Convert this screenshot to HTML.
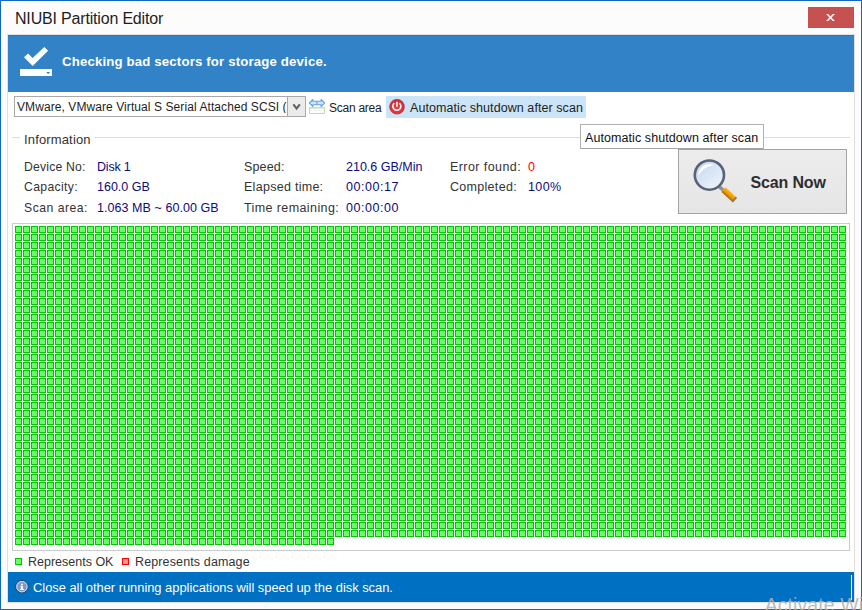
<!DOCTYPE html>
<html><head><meta charset="utf-8">
<style>
*{margin:0;padding:0;box-sizing:border-box}
html,body{width:862px;height:610px;overflow:hidden;background:#fcfcfc}
body{position:relative;font-family:"Liberation Sans",sans-serif;font-size:12px;color:#333}
.a{position:absolute;white-space:nowrap}
.t{position:absolute;white-space:nowrap;line-height:1}
</style></head><body>
<!-- window outer border -->
<div class="a" style="left:0;top:0;width:862px;height:610px;border:1px solid #0f68c8"></div>
<!-- title -->
<div class="t" style="left:15px;top:10.5px;font-size:16px;letter-spacing:-0.18px;color:#1e1e1e">NIUBI Partition Editor</div>
<!-- close button -->
<div class="a" style="left:808px;top:7px;width:46px;height:21px;background:#c75050">
  <svg width="46" height="21" style="position:absolute;left:0;top:0"><path d="M18.1 7 H20.2 L26.9 14 H24.8 Z M24.8 7 H26.9 L20.2 14 H18.1 Z" fill="#fff"/></svg>
</div>
<!-- client border -->
<div class="a" style="left:7px;top:34px;width:848px;height:569px;border:1px solid #e0e0e0;background:#fff"></div>
<!-- header -->
<div class="a" style="left:8px;top:35px;width:846px;height:57px;background:#3282c7;border-top:1px solid #2a78c2"></div>
<svg class="a" style="left:0;top:0" width="80" height="92">
  <path d="M24 57.3 L28.1 53.6 L32.6 57.9 L44.3 47 L48.1 50.7 L32.7 66 Z" fill="#fff"/>
  <rect x="20" y="69" width="32" height="7" fill="#fff"/>
  <path d="M46.3 72 H50.1 L48.6 73.8 H47.8 Z" fill="#3282c7"/>
</svg>
<div class="t" style="left:62px;top:55px;font-size:13.2px;font-weight:bold;color:#fff;letter-spacing:0.17px">Checking bad sectors for storage device.</div>

<!-- combobox -->
<div class="a" style="left:14px;top:96px;width:292px;height:21px;border:1px solid #a9a9a9;background:#fff"></div>
<div class="t" style="left:17px;top:101px;font-size:12px;letter-spacing:0.08px;color:#1e1e1e;width:270px;overflow:hidden">VMware, VMware Virtual S Serial Attached SCSI (Ahmed</div>
<div class="a" style="left:287px;top:97px;width:18px;height:19px;background:#ebebeb;border-left:1px solid #a9a9a9"></div>
<svg class="a" style="left:287px;top:97px" width="18" height="19"><path d="M6.4 7.4 L9.6 11.6 L12.8 7.4" stroke="#606060" stroke-width="2.1" fill="none"/></svg>

<!-- scan area icon -->
<svg class="a" style="left:306px;top:96px" width="22" height="20">
  <path d="M3.5 11.2 V17.5 H18.5 V11.2" fill="#fff" stroke="#bbdca5" stroke-width="1"/>
  <path d="M3.5 11.5 H18.5" stroke="#c4e2b0" stroke-width="1"/>
  <path d="M4 12.5 H18" stroke="#dcefd0" stroke-width="1"/>
  <path d="M5 14.5 H17" stroke="#e6f0e0" stroke-width="1" stroke-dasharray="1 1"/>
  <path d="M3.4 7 L6.9 3.5 V5.3 H15.1 V3.5 L18.6 7 L15.1 10.5 V8.7 H6.9 V10.5 Z" fill="#d3e6f9" stroke="#63a3e3" stroke-width="1.1" stroke-linejoin="round"/>
  <rect x="10.5" y="5.3" width="1.1" height="3.4" fill="#63a3e3"/>
</svg>
<div class="t" style="left:329px;top:102px;font-size:12px;letter-spacing:-0.25px;color:#222">Scan area</div>

<!-- auto shutdown (hover) -->
<div class="a" style="left:386px;top:96px;width:200px;height:22px;background:#cce4f7"></div>
<svg class="a" style="left:388px;top:98px" width="18" height="18">
  <defs><radialGradient id="pw" cx="0.5" cy="0.6" r="0.55">
    <stop offset="0" stop-color="#e8414a"/><stop offset="0.7" stop-color="#e0323a"/><stop offset="1" stop-color="#c82a30"/>
  </radialGradient></defs>
  <circle cx="9" cy="8.7" r="7.4" fill="url(#pw)" stroke="#b52a2e" stroke-width="0.6"/>
  <path d="M6.3 5.1 A4 4 0 1 0 11.4 5.1" stroke="#fff" stroke-width="1.55" fill="none"/>
  <path d="M8.95 3.7 V8.7" stroke="#fff" stroke-width="1.5"/>
</svg>
<div class="t" style="left:410px;top:102px;font-size:12.5px;letter-spacing:0.07px;color:#222">Automatic shutdown after scan</div>

<!-- group box -->
<div class="a" style="left:12px;top:137px;width:8px;height:1px;background:#dcdcdc"></div>
<div class="a" style="left:94px;top:137px;width:756px;height:1px;background:#dcdcdc"></div>
<div class="t" style="left:24px;top:133px;font-size:13px;letter-spacing:0.15px;color:#333">Information</div>

<!-- info rows -->
<div class="t" style="left:24px;top:161px;font-size:12.2px;letter-spacing:0.2px;color:#333">Device No:</div>
<div class="t" style="left:97px;top:161px;font-size:12.5px;letter-spacing:-0.2px;color:#0c0c7c">Disk 1</div>
<div class="t" style="left:24px;top:181px;font-size:12.2px;letter-spacing:0.35px;color:#333">Capacity:</div>
<div class="t" style="left:97px;top:181px;font-size:12.5px;letter-spacing:0px;color:#0c0c7c">160.0 GB</div>
<div class="t" style="left:24px;top:202px;font-size:12.2px;letter-spacing:0.5px;color:#333">Scan area:</div>
<div class="t" style="left:97px;top:202px;font-size:12.5px;letter-spacing:0.06px;color:#0c0c7c">1.063 MB ~ 60.00 GB</div>
<div class="t" style="left:244px;top:161px;font-size:12.5px;letter-spacing:0.15px;color:#333">Speed:</div>
<div class="t" style="left:346px;top:161px;font-size:12.5px;letter-spacing:0px;color:#0c0c7c">210.6 GB/Min</div>
<div class="t" style="left:244px;top:181px;font-size:12.5px;letter-spacing:0.28px;color:#333">Elapsed time:</div>
<div class="t" style="left:346px;top:181px;font-size:12.5px;letter-spacing:0.55px;color:#0c0c7c">00:00:17</div>
<div class="t" style="left:244px;top:202px;font-size:12.5px;letter-spacing:0.4px;color:#333">Time remaining:</div>
<div class="t" style="left:346px;top:202px;font-size:12.5px;letter-spacing:0.55px;color:#0c0c7c">00:00:00</div>
<div class="t" style="left:450px;top:161px;font-size:12.5px;letter-spacing:0.42px;color:#333">Error found:</div>
<div class="t" style="left:528px;top:161px;font-size:12.5px;letter-spacing:0px;color:#ff0000">0</div>
<div class="t" style="left:450px;top:181px;font-size:12.5px;letter-spacing:0.3px;color:#333">Completed:</div>
<div class="t" style="left:528px;top:181px;font-size:12.5px;letter-spacing:0.4px;color:#0c0c7c">100%</div>

<!-- scan now button -->
<div class="a" style="left:678px;top:149px;width:169px;height:65px;border:1px solid #a3a3a3;background:linear-gradient(#ececec,#e6e6e6)"></div>
<div class="a" style="left:683px;top:209px;width:160px;height:1px;background:repeating-linear-gradient(90deg,#dadada 0 1px,transparent 1px 3px)"></div>
<svg class="a" style="left:688px;top:154px" width="56" height="52">
  <defs>
    <linearGradient id="lens" x1="0" y1="0" x2="0.8" y2="1">
      <stop offset="0" stop-color="#bcd2ef"/><stop offset="0.45" stop-color="#d6e3f4"/><stop offset="1" stop-color="#eef3fa"/>
    </linearGradient>
    <linearGradient id="hdl" x1="0" y1="0" x2="0" y2="1">
      <stop offset="0" stop-color="#ffb21a"/><stop offset="0.55" stop-color="#f09800"/><stop offset="1" stop-color="#a86000"/>
    </linearGradient>
  </defs>
  <path d="M30.5 32 L35 36" stroke="#8d9299" stroke-width="3.6"/>
  <g transform="translate(41.2 40.8) rotate(42.5)">
    <rect x="-7.8" y="-3.1" width="15.6" height="6.2" fill="url(#hdl)" rx="0.6"/>
    <rect x="6" y="-3.1" width="1.8" height="6.2" fill="#8a7a60" rx="0.5"/>
  </g>
  <circle cx="21.4" cy="21.1" r="14.6" fill="url(#lens)" stroke="#596277" stroke-width="2.6"/>
  <path d="M10.3 21.6 A11.1 11.1 0 0 1 26.2 11 A21 21 0 0 0 10.3 21.6 Z" fill="#ffffff" opacity="0.92"/>
</svg>
<div class="t" style="left:750.5px;top:174.5px;font-size:16px;letter-spacing:-0.15px;font-weight:bold;color:#2e2e2e">Scan Now</div>

<!-- tooltip -->
<div class="a" style="left:580px;top:124px;width:184px;height:25px;border:1px solid #b0b0b0;border-bottom-color:#a2a2a2;background:#fff;border-radius:1px"></div>
<div class="t" style="left:585px;top:132px;font-size:12.5px;letter-spacing:0.08px;color:#111">Automatic shutdown after scan</div>

<!-- grid -->
<div class="a" style="left:12px;top:223px;width:838px;height:328px;border:1px solid #c6ccd2;background:#fff"></div>
<svg class="a" style="left:15px;top:226px" width="832" height="320" shape-rendering="crispEdges">
  <defs><pattern id="sq" x="0" y="0" width="8" height="8" patternUnits="userSpaceOnUse">
    <rect x="0" y="0" width="7" height="7" fill="#00c800"/><rect x="1" y="1" width="5" height="5" fill="#66ff66"/>
  </pattern></defs>
  <rect x="0" y="0" width="832" height="312" fill="url(#sq)"/>
  <rect x="0" y="312" width="320" height="8" fill="url(#sq)"/>
</svg>

<!-- legend -->
<div class="a" style="left:15px;top:558px;width:7px;height:7px;background:#66ff66;border:1px solid #00c800"></div>
<div class="t" style="left:28px;top:556px;font-size:12.5px;color:#333">Represents OK</div>
<div class="a" style="left:122px;top:558px;width:7px;height:7px;background:#ff9999;border:1px solid #ff0000"></div>
<div class="t" style="left:135px;top:556px;font-size:12.5px;letter-spacing:0.13px;color:#333">Represents damage</div>

<!-- status bar -->
<div class="a" style="left:8px;top:572px;width:846px;height:30px;background:#0070c3"></div>
<div class="a" style="left:851px;top:575px;width:1px;height:25px;background:#fff"></div>
<svg class="a" style="left:14px;top:579px" width="16" height="16">
  <circle cx="7.9" cy="7.7" r="6.2" fill="#7b99c9" stroke="#253a66" stroke-width="0.9"/>
  <circle cx="7.9" cy="7.7" r="5.2" fill="none" stroke="#d4e0f0" stroke-width="1"/>
  <rect x="7" y="4.8" width="1.8" height="1.5" fill="#fff"/>
  <path d="M6.3 7 H8.8 V9.8 H9.9 V10.9 H6.1 V9.8 H7 V7.8 H6.3 Z" fill="#fff"/>
</svg>
<div class="t" style="left:33px;top:582px;font-size:12.9px;letter-spacing:-0.02px;color:#fff">Close all other running applications will speed up the disk scan.</div>

<!-- watermark -->
<div class="t" style="left:764.7px;top:595.5px;font-size:19.5px;letter-spacing:0.08px;color:rgba(178,178,178,0.85)">Activate Windows</div>
</body></html>
